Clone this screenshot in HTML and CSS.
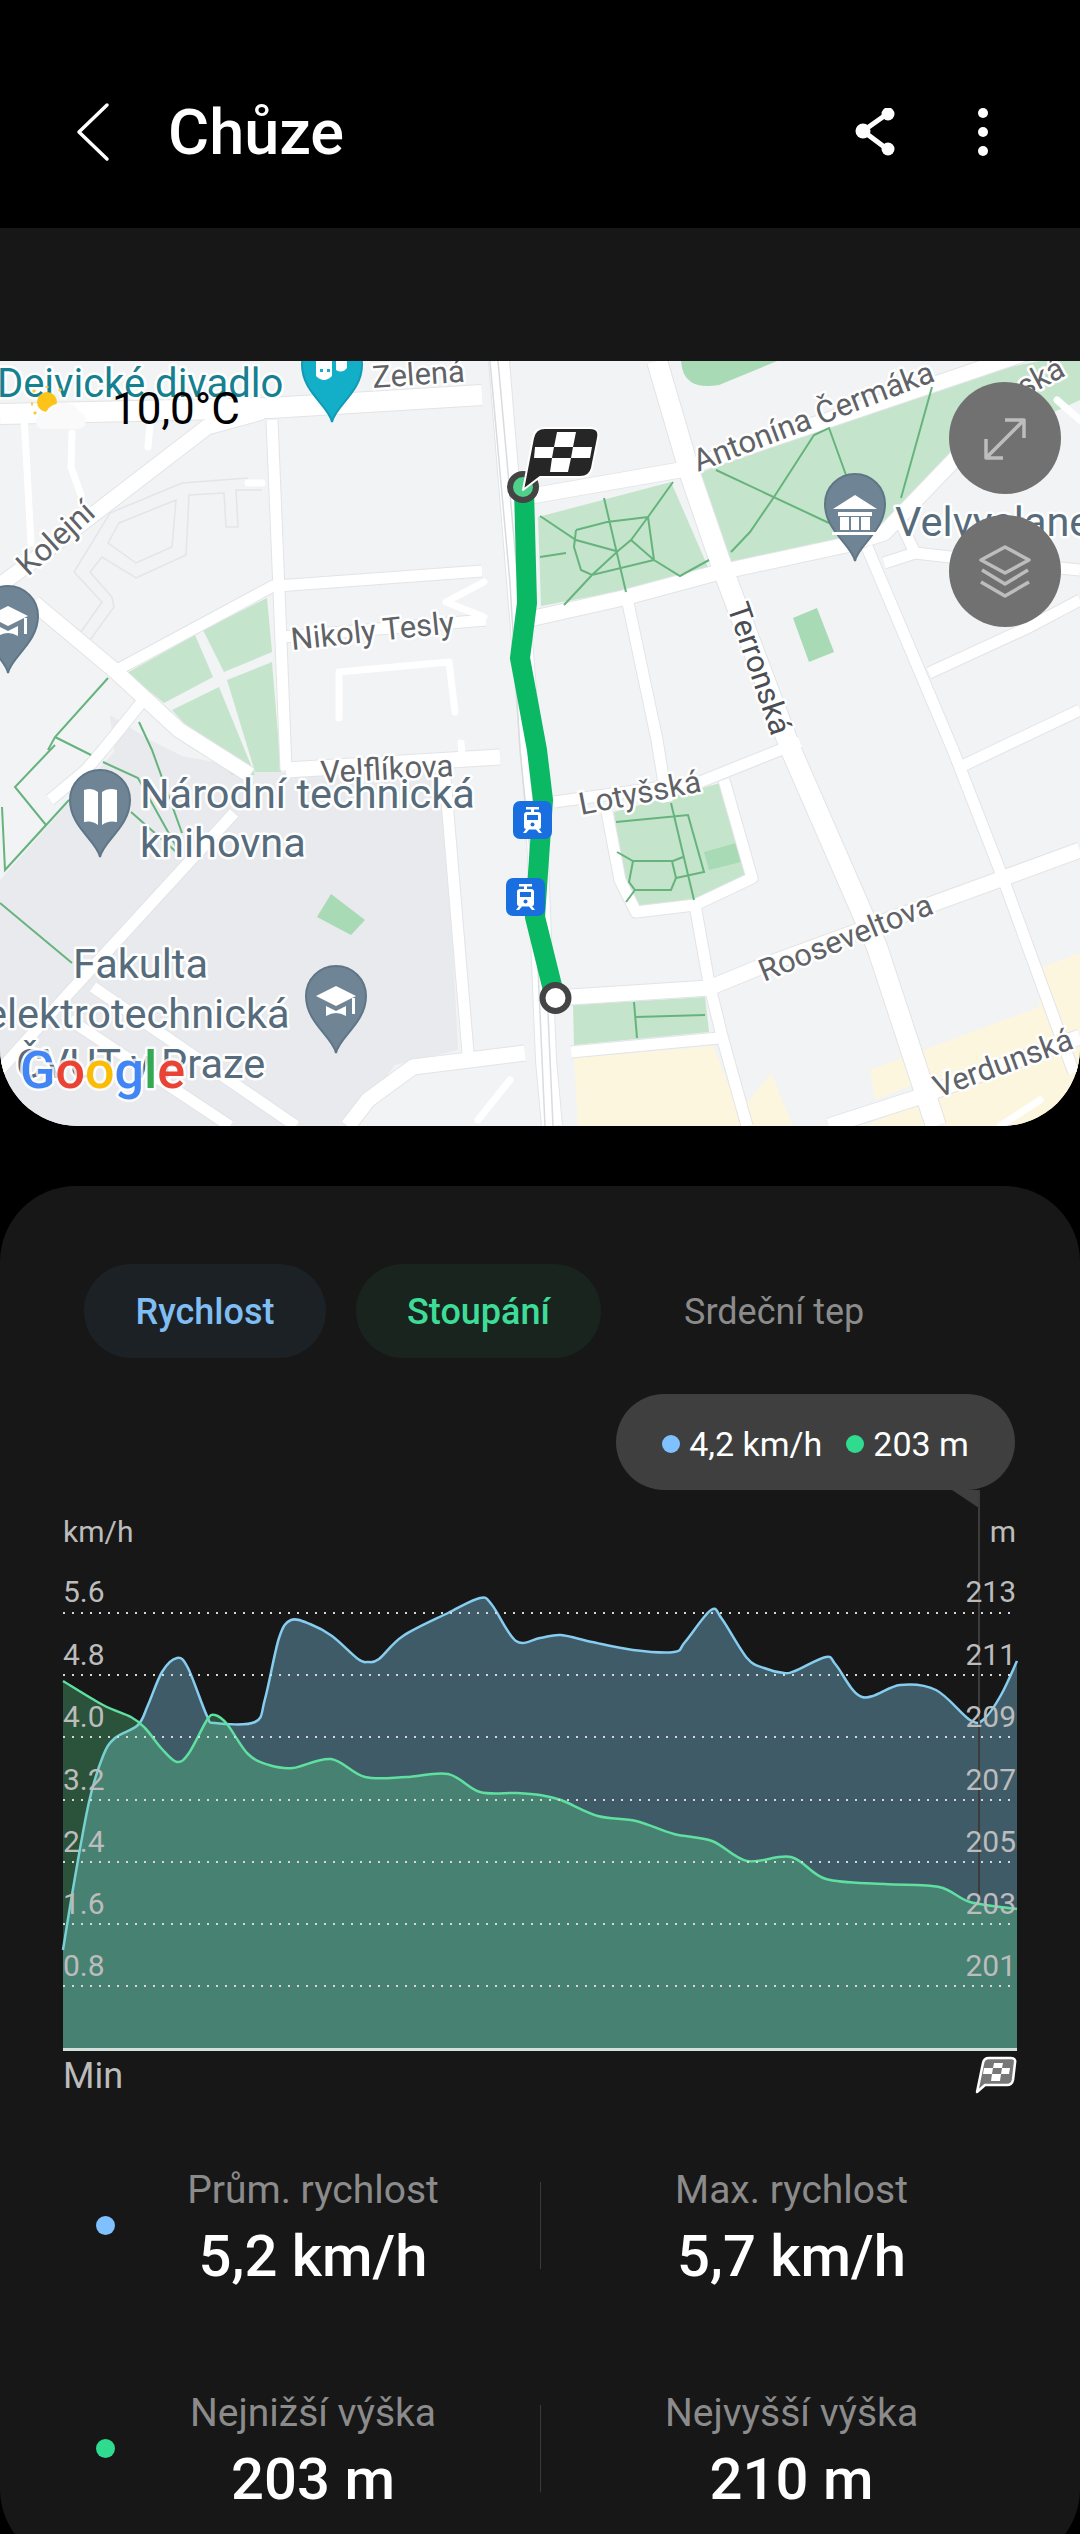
FILE: index.html
```html
<!DOCTYPE html>
<html lang="cs">
<head>
    <meta charset="UTF-8">
    <meta name="viewport" content="width=device-width, initial-scale=1.0">
    <title>Chůze</title>
    <link rel="stylesheet" href="styles.css">
</head>
<body>
    <!-- Horní lišta -->
    <header class="appbar">
        <svg class="icon-back" viewBox="0 0 40 60"><path d="M35 3 L7 30 L35 57"/></svg>
        <h1 class="title">Chůze</h1>
        <svg class="icon-share" viewBox="0 0 48 48">
            <path d="M35 6 L11 23 L35 41"/>
            <circle cx="36" cy="6" r="6.5"/><circle cx="11" cy="23" r="7.5"/><circle cx="36" cy="41" r="6.5"/>
        </svg>
        <svg class="icon-more" viewBox="0 0 20 48">
            <circle cx="10" cy="5" r="5"/><circle cx="10" cy="24" r="5"/><circle cx="10" cy="43" r="5"/>
        </svg>
    </header>

    <div class="strip"></div>

    <!-- Mapa -->
    <section class="map">
        <svg class="map-canvas" viewBox="0 361 1080 765">
            <defs>
                <g id="pin">
                    <path d="M0 0 C-3 -16 -30 -30 -30 -57 A30 30 0 1 1 30 -57 C30 -30 3 -16 0 0 Z"/>
                </g>
                <g id="tram">
                    <rect class="tram-bg" width="39" height="38" rx="7"/>
                    <path class="tram-fg" d="M13 6 H26 V8.500 H21 V11 H25 Q28 11 28 14 V26 Q28 28 26 28 L29 32 H26 L23 28.500 H16 L13 32 H10 L13 28 Q11 28 11 26 V14 Q11 11 14 11 H18 V8.500 H13 Z"/>
                    <rect class="tram-window" x="14" y="14" width="11" height="5"/>
                    <circle class="tram-window" cx="19.500" cy="23.500" r="2"/>
                </g>
                <g id="r20">
                    <path d="M499 361 L536 812 L546 1060 L552 1126"/>
                    <path d="M657 361 L691 477 L722 567 L791 750 L877 947 L936 1126"/>
                    <path d="M0 414 L270 408 L482 395"/>
                </g>
                <g id="r15">
                    <path d="M520 498 L680 470 L932 385 L1080 335"/>
                    <path d="M525 620 L623 598 L716 573 L846 545 L884 533 L957 457 L1010 400"/>
                    <path d="M286 770 L500 757"/>
                    <path d="M555 998 L709 988 L760 967 L1080 850"/>
                    <path d="M829 1126 L919 1097 L1080 1037"/>
                    <path d="M0 585 L34 560 L207 427 L262 412"/>
                    <path d="M34 603 L114 670 L179 730 L250 775"/>
                    <path d="M348 1126 L368 1100 L413 1067 L525 1053"/>
                </g>
                <g id="r11">
                    <path d="M272 420 L279 590 L286 770"/>
                    <path d="M275 585 L117 670"/>
                    <path d="M277 586 L482 571"/>
                    <path d="M282 637 L486 620"/>
                    <path d="M141 703 L103 750 L86 770 L50 800"/>
                    <path d="M234 813 L69 993 L0 1070"/>
                    <path d="M93 987 L296 1126"/>
                    <path d="M70 1020 L230 1126"/>
                    <path d="M444 765 L468 1053"/>
                    <path d="M554 802 L700 782 L785 748 L800 742"/>
                    <path d="M628 603 L657 740 L667 802"/>
                    <path d="M695 905 L709 983 L723 1040 L747 1126"/>
                    <path d="M571 1052 L719 1038"/>
                    <path d="M867 547 L953 750 L1001 873 L1074 1073"/>
                    <path d="M929 673 L1029 627 L1080 600"/>
                    <path d="M960 767 L1080 710"/>
                    <path d="M884 563 L915 553 L950 557 L1080 570"/>
                    <path d="M915 553 L898 517"/>
                    <path d="M607 812 L620 880 L636 912 L695 905 L752 878 L724 780"/>
                </g>
                <g id="r7">
                    <path d="M24 415 L31 543"/>
                    <path d="M72 433 L71 467 L81 495"/>
                    <path d="M150 425 L148 447"/>
                    <path d="M339 718 L339 672 L449 662 L455 712"/>
                    <path d="M446 602 L484 582 M446 602 L484 617"/>
                    <path d="M248 483 L262 483"/>
                    <path d="M461 743 L462 755"/>
                    <path d="M1057 400 L1080 420"/>
                    <path d="M1000 1126 L1040 1100"/>
                    <path d="M478 1120 L510 1080"/>
                </g>
            </defs>

            <rect class="land" x="0" y="361" width="1080" height="765"/>
            <path class="campus" d="M120 745 L270 772 L444 772 L458 1050 L395 1065 L350 1126 L0 1126 L0 880 Z"/>
            <path class="campus" d="M110 715 L150 740 L190 760 L120 800 Z"/>

            <g class="park">
                <path d="M538 517 L671 482 L711 574 L541 606 Z"/>
                <path d="M700 473 L930 383 L1040 361 L1080 361 L1080 400 L957 457 L895 510 L865 540 L731 562 Z"/>
                <path d="M127 673 L195 635 L213 677 L164 703 Z"/>
                <path d="M203 630 L267 598 L272 652 L224 672 Z"/>
                <path d="M227 680 L272 662 L281 772 L255 772 Z"/>
                <path d="M172 710 L219 687 L255 775 L232 775 Z"/>
                <path d="M614 812 L724 782 L754 873 L695 900 L636 907 L626 902 Z"/>
                <path d="M573 1005 L705 997 L709 1032 L574 1045 Z"/>
            </g>
            <g class="park-dark">
                <path d="M681 361 L777 361 L719 385 Q700 388 691 382 Q682 376 681 361 Z"/>
                <path d="M793 618 L817 608 L834 652 L809 662 Z"/>
                <path d="M317 917 L331 894 L365 920 L351 935 Z"/>
                <path d="M704 852 L736 843 L741 862 L709 870 Z"/>
            </g>
            <g class="cream">
                <path d="M574 1058 L713 1046 L745 1126 L578 1126 Z"/>
                <path d="M747 1103 L771 1073 L793 1126 L745 1126 Z"/>
                <path d="M870 1070 L1039 1007 L1043 967 L1080 953 L1080 1126 L945 1126 L925 1080 L875 1100 Z"/>
                <path d="M864 1126 L919 1103 L935 1126 Z"/>
            </g>

            <path class="outline" d="M74 572 L110 513 L182 483 L248 478 M74 572 L102 602 L81 632 M90 572 L102 557 L136 578 L186 555 L189 495 L224 493 L226 527 L238 527 L236 490 L262 490 M90 640 L114 607 L112 597 L90 572 M119 523 L176 500 L172 547 L136 563 L108 543 Z"/>

            <use href="#r20" class="casing w20"/>
            <use href="#r15" class="casing w15"/>
            <use href="#r11" class="casing w11"/>
            <use href="#r20" class="road w20"/>
            <use href="#r15" class="road w15"/>
            <use href="#r11" class="road w11"/>
            <use href="#r7" class="road w7"/>

            <path class="rail" d="M490 361 L510 583 L520 750 L535 900 L545 1126 M498 361 L518 583 L528 750 L543 900 L553 1126"/>

            <path class="trail" d="M540 516 L576 540 L616 551 M576 530 L607 522 L648 517 M576 530 L574 547 L581 570 L592 575 L654 560 L648 517 M604 498 L626 592 M673 482 L648 517 L631 540 L619 550 L592 575 L564 605 M631 540 L654 560 L680 576 L709 560 M540 557 L566 553 M716 470 L829 523 M731 552 L750 532 L774 497 L814 435 L829 428 L846 475 M932 387 L901 498"/>
            <path class="trail" d="M616 822 L688 815 L704 872 L676 878 M671 803 L694 900 M617 852 L633 861 L673 861 L683 857 M633 861 L629 882 L635 890 L671 890 L676 878 L672 861 M635 890 L626 902 M634 1002 L637 1038 M636 1017 L705 1015"/>
            <path class="trail" d="M108 678 L55 737 L48 750 M55 737 L91 755 M103 762 L138 778 L182 857 M139 722 L152 750 L182 833 M55 745 L15 787 L46 825 L5 870 L2 807 M69 800 L5 870 M0 903 L72 963 M131 812 L182 857"/>

            <!-- Trasa -->
            <path class="route" d="M524 490 L527 603 L520 658 L537 750 L543 800 L535 917 L555 998"/>
            <use href="#tram" x="513" y="801"/>
            <use href="#tram" x="506" y="878"/>
            <circle class="route-end" cx="555.500" cy="998" r="13"/>
            <circle class="route-start" cx="523" cy="487" r="13"/>

            <!-- Popisky -->
            <text class="label poi teal" x="-3" y="397">Dejvické divadlo</text>
            <text class="label street" x="373" y="388" transform="rotate(-4 373 388)">Zelená</text>
            <text class="label street" x="28" y="577" transform="rotate(-42 28 577)">Kolejní</text>
            <text class="label street" x="292" y="650" transform="rotate(-6 292 650)">Nikoly Tesly</text>
            <text class="label street" x="321" y="783" transform="rotate(-3 321 783)">Velflíkova</text>
            <text class="label street" x="581" y="815" transform="rotate(-11 581 815)">Lotyšská</text>
            <text class="label street" x="764" y="982" transform="rotate(-22 764 982)">Rooseveltova</text>
            <text class="label street" x="938" y="1098" transform="rotate(-20 938 1098)">Verdunská</text>
            <text class="label street" x="698" y="472" transform="rotate(-21 698 472)">Antonína Čermáka</text>
            <text class="label street dark" x="727" y="607" transform="rotate(71 727 607)">Terronská</text>
            <text class="label street tail" x="1067" y="375" transform="rotate(-28 1067 375)">ská</text>
            <text class="label poi" x="140" y="808">Národní technická</text>
            <text class="label poi" x="140" y="857">knihovna</text>
            <text class="label poi" x="73" y="978">Fakulta</text>
            <text class="label poi" x="-15" y="1028">elektrotechnická</text>
            <text class="label poi" x="16" y="1078">ČVUT v Praze</text>
            <text class="label poi" x="895" y="536">Velvyslanectví</text>

            <!-- Špendlíky -->
            <use href="#pin" x="332" y="422" class="pin-teal"/>
            <use href="#pin" x="8" y="673" class="pin-grey"/>
            <use href="#pin" x="855" y="561" class="pin-grey"/>
            <use href="#pin" x="100" y="857" class="pin-grey"/>
            <use href="#pin" x="336" y="1053" class="pin-grey"/>
            <g class="glyph">
                <path d="M316 361 H332 V376 Q324 384 316 376 Z"/>
                <path d="M336 361 H347 V368 Q342 374 336 370 Z"/>
                <path class="pin-cutout" d="M320 369 h3 v3 h-3 Z M327 369 h3 v3 h-3 Z"/>
                <path d="M8 606 L28 616 L8 626 L-12 616 Z M-2 626 L8 631 L18 626 V636 Q8 630 -2 636 Z"/>
                <path d="M24 618 H27 V634 H24 Z"/>
                <path d="M336 986 L356 996 L336 1006 L316 996 Z M326 1006 L336 1011 L346 1006 V1016 Q336 1010 326 1016 Z"/>
                <path d="M352 998 H355 V1014 H352 Z"/>
                <path d="M855 495 L877 509 H833 Z M838 512 H872 V516 H838 Z M840 517 H849 V530 H840 Z M851 517 H859 V530 H851 Z M861 517 H870 V530 H861 Z M832 532 H878 V535 H832 Z"/>
                <path d="M84 790 Q92 787 98 792 V825 Q92 820 84 822 Z M102 792 Q108 787 117 790 V822 Q108 820 102 825 Z"/>
            </g>

            <!-- Cílová vlajka -->
            <path class="flag" d="M523 490 L533 438 Q535 428 545 428 H590 Q600 428 598 438 L592 468 Q590 477 580 477 H540 Z"/>
            <path class="flag-check" d="M557 432 H576 L573 447 H554 Z M535 447 H554 L552 458 H534 Z M573 447 H592 L590 458 H571 Z M552 458 H571 L568 472 H550 Z"/>

            <text class="google" x="20" y="1088"><tspan class="g-blue">G</tspan><tspan class="g-red">o</tspan><tspan class="g-yellow">o</tspan><tspan class="g-blue">g</tspan><tspan class="g-green">l</tspan><tspan class="g-red">e</tspan></text>
        </svg>

        <!-- Počasí -->
        <div class="weather">
            <svg class="weather-icon" viewBox="0 0 60 50">
                <circle class="sun" cx="17" cy="19" r="10"/>
                <path class="sun-ray" d="M17 5 V3 M5 9 L3 7 M1 21 H3 M4 31 L6 29 M29 8 L31 6"/>
                <path class="cloud" d="M14 46 Q6 46 6 38 Q6 30 16 29 Q20 20 34 20 Q46 20 48 28 Q56 30 56 38 Q56 46 46 46 Z"/>
            </svg>
            <span class="weather-temp">10,0°C</span>
        </div>

        <!-- Tlačítka mapy -->
        <button class="map-btn btn-expand">
            <svg viewBox="0 0 112 112"><path d="M37 76 L75 38 M56 38 H75 V56 M37 57 V76 H54"/></svg>
        </button>
        <button class="map-btn btn-layers">
            <svg viewBox="0 0 112 112"><path d="M56 32 L80 45 L56 58 L32 45 Z M33 55 L56 69 L79 55 M32 67 L56 81 L80 67"/></svg>
        </button>
    </section>

    <!-- Karta s grafem -->
    <section class="card">
        <div class="tabs">
            <div class="tab tab-speed">Rychlost</div>
            <div class="tab tab-climb">Stoupání</div>
            <div class="tab tab-heart">Srdeční tep</div>
        </div>

        <div class="bubble-row">
            <div class="bubble">
                <span class="dot dot-blue"></span><span class="bubble-val">4,2 km/h</span>
                <span class="dot dot-green dot-second"></span><span class="bubble-val">203 m</span>
            </div>
        </div>

        <svg class="chart" viewBox="0 1490 1080 620">
            <path id="fillSpeed" class="fill-speed"/>
            <path id="lineSpeed" class="line-speed"/>
            <path id="fillClimb" class="fill-climb"/>
            <path id="lineClimb" class="line-climb"/>

            <g class="grid">
                <path d="M63 1613 H1017"/>
                <path d="M63 1675 H1017"/>
                <path d="M63 1737 H1017"/>
                <path d="M63 1800 H1017"/>
                <path d="M63 1862 H1017"/>
                <path d="M63 1924 H1017"/>
                <path d="M63 1986 H1017"/>
            </g>
            <path class="axis" d="M63 2049.500 H1017"/>
            <path class="bubble-tail" d="M952 1490 L979 1490 L979 1508 Z"/>
            <path class="cursor" d="M979 1490 V1902"/>

            <g class="axis-text">
                <text x="63" y="1542">km/h</text>
                <text x="63" y="1602">5.6</text>
                <text x="63" y="1665">4.8</text>
                <text x="63" y="1727">4.0</text>
                <text x="63" y="1790">3.2</text>
                <text x="63" y="1852">2.4</text>
                <text x="63" y="1914">1.6</text>
                <text x="63" y="1976">0.8</text>
                <g class="end">
                    <text x="1016" y="1542">m</text>
                    <text x="1016" y="1602">213</text>
                    <text x="1016" y="1665">211</text>
                    <text x="1016" y="1727">209</text>
                    <text x="1016" y="1790">207</text>
                    <text x="1016" y="1852">205</text>
                    <text x="1016" y="1914">203</text>
                    <text x="1016" y="1976">201</text>
                </g>
                <text class="axis-min" x="63" y="2088">Min</text>
            </g>

            <path class="mini-flag" d="M977 2092 L983 2063 Q984 2058 989 2058 H1011 Q1016 2058 1015 2063 L1013 2080 Q1012 2085 1007 2085 H985 Z"/>
            <path class="mini-check" d="M994 2063 H1003 L1002 2068 H993 Z M984 2068 H993 L992 2074 H983 Z M1002 2068 H1010 L1009 2074 H1001 Z M992 2074 H1001 L1000 2081 H991 Z"/>
        </svg>

        <!-- Souhrn -->
        <div class="stats">
            <div class="stat-row">
                <span class="dot dot-blue dot-stat"></span>
                <div class="stat stat-left">
                    <div class="stat-name">Prům. rychlost</div>
                    <div class="stat-value">5,2 km/h</div>
                </div>
                <span class="stat-sep"></span>
                <div class="stat stat-right">
                    <div class="stat-name">Max. rychlost</div>
                    <div class="stat-value">5,7 km/h</div>
                </div>
            </div>
            <div class="stat-row">
                <span class="dot dot-green dot-stat"></span>
                <div class="stat stat-left">
                    <div class="stat-name">Nejnižší výška</div>
                    <div class="stat-value">203 m</div>
                </div>
                <span class="stat-sep"></span>
                <div class="stat stat-right">
                    <div class="stat-name">Nejvyšší výška</div>
                    <div class="stat-value">210 m</div>
                </div>
            </div>
        </div>
    </section>

    <script src="chart.js"></script>
</body>
</html>
```

FILE: styles.css
```css
/* Obecné */
* {
    box-sizing: border-box;
}

html, body {
    margin: 0;
    width: 1080px;
    height: 2534px;
    overflow: hidden;
    background-color: #000;
}

body {
    font-family: Roboto, "Liberation Sans", sans-serif;
    color: #fff;
}

/* Horní lišta */
.appbar {
    height: 228px;
    padding: 36px 0 0 72px;
    display: flex;
    align-items: center;
}

.icon-back {
    width: 40px;
    height: 60px;
    fill: none;
    stroke: #fff;
    stroke-width: 3.5;
    stroke-linecap: round;
    stroke-linejoin: round;
}

.title {
    flex: 1;
    margin: 0 0 0 56px;
    font-size: 63px;
    font-weight: 500;
}

.icon-share {
    width: 48px;
    height: 48px;
    fill: #fff;
    stroke: #fff;
    stroke-width: 0;
}

.icon-share path {
    fill: none;
    stroke-width: 5;
}

.icon-more {
    width: 20px;
    height: 48px;
    margin: 0 87px 0 73px;
    fill: #fff;
}

.strip {
    height: 133px;
    background-color: #171717;
}

/* Mapa */
.map {
    position: relative;
    height: 765px;
    overflow: hidden;
    border-radius: 0 0 78px 78px;
}

.map-canvas {
    display: block;
    width: 1080px;
    height: 765px;
}

.land {
    fill: #f1f3f4;
}

.campus {
    fill: #e8eaed;
}

.park {
    fill: #c4e5cb;
}

.park-dark {
    fill: #a8dab5;
}

.cream {
    fill: #fdf6df;
}

.outline {
    fill: none;
    stroke: #e3e5e8;
    stroke-width: 1.5;
}

.casing, .road {
    fill: none;
    stroke-linejoin: round;
}

.casing {
    stroke: #e2e4e7;
}

.road {
    stroke: #fff;
}

.road.w20 { stroke-width: 20; }
.road.w15 { stroke-width: 15; }
.road.w11 { stroke-width: 11; }
.road.w7 { stroke-width: 7; stroke-linecap: round; }
.casing.w20 { stroke-width: 22; }
.casing.w15 { stroke-width: 17; }
.casing.w11 { stroke-width: 13; }

.rail {
    fill: none;
    stroke: #d9dbdf;
    stroke-width: 1.5;
}

.trail {
    fill: none;
    stroke: #66b37e;
    stroke-width: 2;
}

.route {
    fill: none;
    stroke: #0bb964;
    stroke-width: 20;
    stroke-linejoin: round;
}

.route-end {
    fill: #fff;
    stroke: #444;
    stroke-width: 6;
}

.route-start {
    fill: #4fd18c;
    stroke: #444;
    stroke-width: 6;
}

.tram-bg {
    fill: #1a6fe0;
}

.tram-fg {
    fill: #fff;
}

.tram-window {
    fill: #1a6fe0;
}

.label {
    paint-order: stroke;
    stroke: #fff;
    stroke-width: 5px;
    stroke-linejoin: round;
}

.label.street {
    font-size: 31px;
    fill: #5f6368;
}

.label.dark {
    fill: #4a4e54;
}

.label.tail {
    text-anchor: end;
}

.label.poi {
    font-size: 41.500px;
    fill: #566c7c;
}

.label.teal {
    font-size: 40px;
    fill: #15808f;
}

.pin-teal {
    fill: #13afc9;
    stroke: #0f9bb3;
    stroke-width: 2;
}

.pin-grey {
    fill: #6f8596;
    stroke: #5f7686;
    stroke-width: 2;
}

.glyph {
    fill: #fff;
}

.pin-cutout {
    fill: #13afc9;
}

.flag {
    fill: #262626;
    stroke: #fff;
    stroke-width: 2;
    stroke-linejoin: round;
}

.flag-check {
    fill: #fff;
}

.google {
    font-size: 52px;
    font-weight: 500;
    paint-order: stroke;
    stroke: #fff;
    stroke-width: 5px;
    stroke-opacity: .8;
    stroke-linejoin: round;
}

.g-blue { fill: #4285f4; }
.g-red { fill: #ea4335; }
.g-yellow { fill: #fbbc05; }
.g-green { fill: #34a853; }

.weather {
    position: absolute;
    left: 30px;
    top: 22px;
    display: flex;
    align-items: flex-start;
}

.weather-icon {
    width: 60px;
    height: 50px;
}

.sun { fill: #fcc419; }

.sun-ray {
    fill: none;
    stroke: #f4cc4a;
    stroke-width: 3;
}

.cloud {
    fill: #fafafa;
}

.weather-temp {
    margin-left: 22px;
    font-size: 44px;
    line-height: 52px;
    color: #000;
}

.map-btn {
    position: absolute;
    left: 949px;
    width: 112px;
    height: 112px;
    padding: 0;
    border: none;
    border-radius: 50%;
    background-color: #717171;
}

.btn-expand { top: 21px; }
.btn-layers { top: 154px; }

.map-btn svg {
    display: block;
    fill: none;
    stroke: #bdbdbd;
    stroke-width: 3.5;
    stroke-linejoin: round;
}

/* Karta */
.card {
    height: 1379px;
    margin-top: 60px;
    padding-top: 78px;
    background-color: #171717;
    border-radius: 76px;
}

.tabs {
    display: flex;
    padding-left: 84px;
    gap: 30px;
}

.tab {
    height: 94px;
    line-height: 96px;
    border-radius: 47px;
    font-size: 36px;
    font-weight: 500;
    text-align: center;
}

.tab-speed {
    width: 242px;
    color: #7fbdf2;
    background-color: #1c2125;
}

.tab-climb {
    width: 245px;
    color: #3ddc97;
    background-color: #19241f;
}

.tab-heart {
    margin-left: 53px;
    color: #8b8b8b;
    font-weight: 400;
}

.bubble-row {
    display: flex;
    justify-content: flex-end;
    margin-top: 36px;
    padding-right: 65px;
}

.bubble {
    width: 399px;
    height: 96px;
    padding-top: 3px;
    border-radius: 48px;
    background-color: #3f3f3f;
    display: flex;
    align-items: center;
    justify-content: center;
    font-size: 34px;
}

.dot {
    display: block;
    width: 18px;
    height: 18px;
    border-radius: 50%;
    flex: none;
}

.dot-blue { background-color: #7fc1ff; }
.dot-green { background-color: #2fdc8f; }

.bubble-val {
    margin-left: 9px;
}

.dot-second {
    margin-left: 24px;
}

.chart {
    display: block;
    width: 1080px;
    height: 620px;
}

.fill-speed { fill: #7dc3e1; fill-opacity: .4; }
.fill-climb { fill: #5ad98c; fill-opacity: .3; }

.line-speed, .line-climb {
    fill: none;
    stroke-width: 2.5;
}

.line-speed { stroke: #86cdf0; }
.line-climb { stroke: #5fe0a0; }

.grid path {
    fill: none;
    stroke: #d8d8d8;
    stroke-width: 2;
    stroke-dasharray: 2 7;
}

.axis {
    fill: none;
    stroke: #d5e0dc;
    stroke-width: 3;
}

.bubble-tail {
    fill: #3f3f3f;
}

.cursor {
    fill: none;
    stroke: #3c3c3c;
    stroke-width: 2;
}

.axis-text {
    font-size: 30px;
    fill: #bcbcbc;
}

.axis-text .end {
    text-anchor: end;
}

.axis-min {
    font-size: 36px;
}

.mini-flag {
    fill: #777;
    stroke: #fff;
    stroke-width: 2.5;
    stroke-linejoin: round;
}

.mini-check {
    fill: #fff;
}

/* Souhrn */
.stats {
    margin-top: 56px;
}

.stat-row {
    display: flex;
    align-items: center;
    height: 124px;
    padding-left: 96px;
    margin-bottom: 99px;
}

.dot-stat {
    width: 19px;
    height: 19px;
    margin-bottom: 5px;
}

.stat {
    text-align: center;
}

.stat-left {
    width: 396px;
    margin-right: 29px;
}

.stat-right {
    width: 501px;
}

.stat-sep {
    width: 1px;
    height: 87px;
    margin-bottom: 5px;
    background-color: #3a3a3a;
}

.stat-name {
    font-size: 39px;
    line-height: 48px;
    color: #8b8b8b;
}

.stat-value {
    margin-top: 8px;
    font-size: 58px;
    line-height: 68px;
    font-weight: 500;
}
```

FILE: chart.js
```js
// Data grafu: body krivky v souradnicich SVG
const speed = [[63,1950],[74,1883],[89,1802],[103,1756],[115,1738],[138,1725],[148,1705],[162,1672],[177,1658],[188,1668],[207,1716],[215,1723],[255,1722],[265,1699],[279,1638],[291,1620],[310,1624],[332,1636],[358,1659],[368,1662],[379,1659],[403,1636],[448,1613],[480,1598],[492,1605],[516,1641],[540,1638],[561,1635],[592,1642],[633,1650],[674,1652],[685,1642],[711,1610],[722,1619],[747,1658],[764,1668],[784,1673],[795,1671],[826,1657],[836,1665],[862,1697],[900,1685],[936,1690],[970,1720],[984,1719],[1001,1695],[1017,1661]];
const climb = [[63,1681],[103,1705],[131,1717],[145,1728],[162,1749],[177,1762],[189,1753],[207,1720],[215,1715],[227,1724],[248,1754],[269,1765],[293,1768],[331,1759],[365,1777],[406,1777],[448,1774],[480,1792],[516,1793],[540,1795],[561,1800],[598,1816],[636,1821],[674,1834],[712,1841],[747,1861],[791,1857],[826,1879],[884,1884],[939,1887],[970,1902],[1017,1909]];

const BASE = 2049;

function krivka(body) {
    let d = "M" + body[0][0] + " " + body[0][1];
    for (let i = 0; i < body.length - 1; i++) {
        const p0 = body[i - 1] || body[i];
        const p1 = body[i];
        const p2 = body[i + 1];
        const p3 = body[i + 2] || p2;
        const c1x = p1[0] + (p2[0] - p0[0]) / 6;
        const c1y = p1[1] + (p2[1] - p0[1]) / 6;
        const c2x = p2[0] - (p3[0] - p1[0]) / 6;
        const c2y = p2[1] - (p3[1] - p1[1]) / 6;
        d += " C" + c1x.toFixed(1) + " " + c1y.toFixed(1) + " " + c2x.toFixed(1) + " " + c2y.toFixed(1) + " " + p2[0] + " " + p2[1];
    }
    return d;
}

function vykresli(body, lineId, fillId) {
    const d = krivka(body);
    document.getElementById(lineId).setAttribute("d", d);
    document.getElementById(fillId).setAttribute("d", d + " L" + body[body.length - 1][0] + " " + BASE + " L" + body[0][0] + " " + BASE + " Z");
}

vykresli(speed, "lineSpeed", "fillSpeed");
vykresli(climb, "lineClimb", "fillClimb");
```
